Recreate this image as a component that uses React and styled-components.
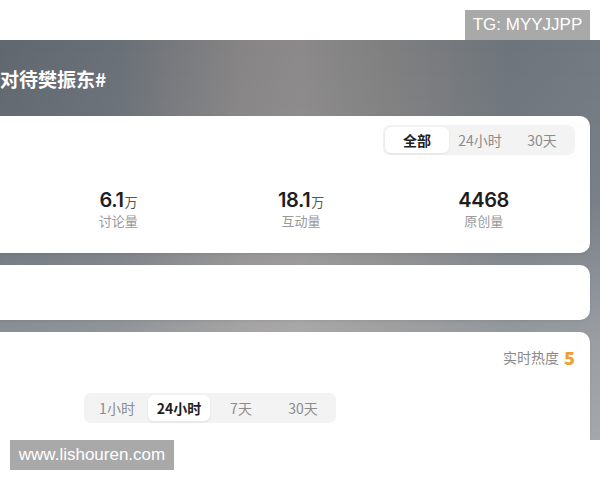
import React from "react";
import styled, { createGlobalStyle } from "styled-components";

// ---------- Global ----------
const GlobalStyle = createGlobalStyle`
  html, body {
    margin: 0;
    padding: 0;
    background: #ffffff;
    font-family: "Noto Sans CJK SC", "Noto Sans", sans-serif;
  }
  * { box-sizing: border-box; }
`;

// ---------- Styled Components ----------
const Page = styled.div`
  position: relative;
  width: 600px;
  height: 480px;
  overflow: hidden;
  background: #ffffff;
`;

const TopSpace = styled.div`
  height: 40px;
`;

const Banner = styled.div`
  height: 400px;
  overflow: hidden;
  background:
    linear-gradient(180deg, rgba(255,255,255,0) 0%, rgba(255,255,255,0.05) 40%, rgba(255,255,255,0.28) 75%, rgba(255,255,255,0.35) 100%),
    linear-gradient(90deg, #60676f 0%, #6a7077 20%, #868484 40%, #8b8989 50%, #7f7f80 65%, #6d747b 85%, #737980 100%);
`;

const Title = styled.div`
  height: 76px;
  display: flex;
  align-items: center;
  color: #ffffff;
  font-size: 19px;
  font-weight: 700;
`;

const Cards = styled.div`
  display: flex;
  flex-direction: column;
  gap: 12px;
  margin-left: -20px;
  margin-right: 10px;
`;

const Card = styled.div`
  background: #ffffff;
  border-radius: 10px;
  box-shadow: 0 1px 3px rgba(0, 0, 0, 0.08);
  height: ${(p) => p.h}px;
  padding: ${(p) => p.pad || "0"};
`;

const ControlRow = styled.div`
  display: flex;
  justify-content: ${(p) => p.justify || "flex-end"};
  margin-top: ${(p) => p.top || 0}px;
`;

const Segmented = styled.div`
  display: flex;
  height: 30px;
  padding: 2px;
  background: #f3f3f3;
  border-radius: 7px;
  margin-left: ${(p) => p.offset || 0}px;
`;

const SegItem = styled.div`
  width: ${(p) => p.w}px;
  display: flex;
  align-items: center;
  justify-content: center;
  font-size: 14px;
  border-radius: 6px;
  color: ${(p) => (p.active ? "#1f1f1f" : "#8c8c8c")};
  font-weight: ${(p) => (p.active ? 700 : 400)};
  background: ${(p) => (p.active ? "#ffffff" : "transparent")};
  box-shadow: ${(p) => (p.active ? "0 1px 3px rgba(0,0,0,0.08)" : "none")};
`;

const Stats = styled.div`
  display: grid;
  grid-template-columns: repeat(3, 1fr);
  margin-top: 33px;
  width: 548px;
`;

const Stat = styled.div`
  display: flex;
  flex-direction: column;
  align-items: center;
`;

const Num = styled.div`
  height: 24px;
  display: flex;
  align-items: baseline;
  font-family: Inter, "Noto Sans", sans-serif;
  font-size: 20px;
  line-height: 24px;
  font-weight: 600;
  color: #1e1e1e;
  letter-spacing: -0.4px;
`;

const Unit = styled.span`
  font-family: "Noto Sans CJK SC", sans-serif;
  font-size: 13px;
  font-weight: 400;
  color: #555;
  margin-left: 1px;
`;

const Label = styled.div`
  font-size: 13px;
  line-height: 18px;
  height: 18px;
  color: #999999;
`;

const HeatRow = styled.div`
  display: flex;
  justify-content: flex-end;
  align-items: center;
  height: 26px;
  gap: 5px;
`;

const HeatLabel = styled.span`
  font-size: 14px;
  color: #8a8a8a;
`;

const HeatValue = styled.span`
  font-size: 18px;
  font-weight: 900;
  color: #f0a030;
`;

const Watermark = styled.div`
  position: absolute;
  left: ${(p) => p.x}px;
  top: ${(p) => p.y}px;
  width: ${(p) => p.w}px;
  height: 30px;
  display: flex;
  align-items: center;
  justify-content: center;
  background: #a9a9a9;
  color: #ffffff;
  font-family: "Liberation Sans", Arial, sans-serif;
  font-size: 17px;
`;

// ---------- Data ----------
const stats = [
  { value: "6.1", unit: "万", label: "讨论量" },
  { value: "18.1", unit: "万", label: "互动量" },
  { value: "4468", unit: "", label: "原创量" },
];

// ---------- React Component ----------
export default function App() {
  return (
    <Page>
      <GlobalStyle />
      <TopSpace />
      <Banner>
        <Title>对待樊振东#</Title>
        <Cards>
          <Card h={137} pad="9px 15px 0 47px">
            <ControlRow>
              <Segmented>
                <SegItem w={64} active>全部</SegItem>
                <SegItem w={62}>24小时</SegItem>
                <SegItem w={62}>30天</SegItem>
              </Segmented>
            </ControlRow>
            <Stats>
              {stats.map((s) => (
                <Stat key={s.label}>
                  <Num>
                    {s.value}
                    {s.unit && <Unit>{s.unit}</Unit>}
                  </Num>
                  <Label>{s.label}</Label>
                </Stat>
              ))}
            </Stats>
          </Card>
          <Card h={55} />
          <Card h={200} pad="12px 15px 0 0">
            <HeatRow>
              <HeatLabel>实时热度</HeatLabel>
              <HeatValue>5</HeatValue>
            </HeatRow>
            <ControlRow justify="flex-start" top={23}>
              <Segmented offset={104}>
                <SegItem w={62}>1小时</SegItem>
                <SegItem w={62} active>24小时</SegItem>
                <SegItem w={62}>7天</SegItem>
                <SegItem w={62}>30天</SegItem>
              </Segmented>
            </ControlRow>
          </Card>
        </Cards>
      </Banner>
      <Watermark x={465} y={10} w={125}>TG: MYYJJPP</Watermark>
      <Watermark x={10} y={440} w={164}>www.lishouren.com</Watermark>
    </Page>
  );
}
